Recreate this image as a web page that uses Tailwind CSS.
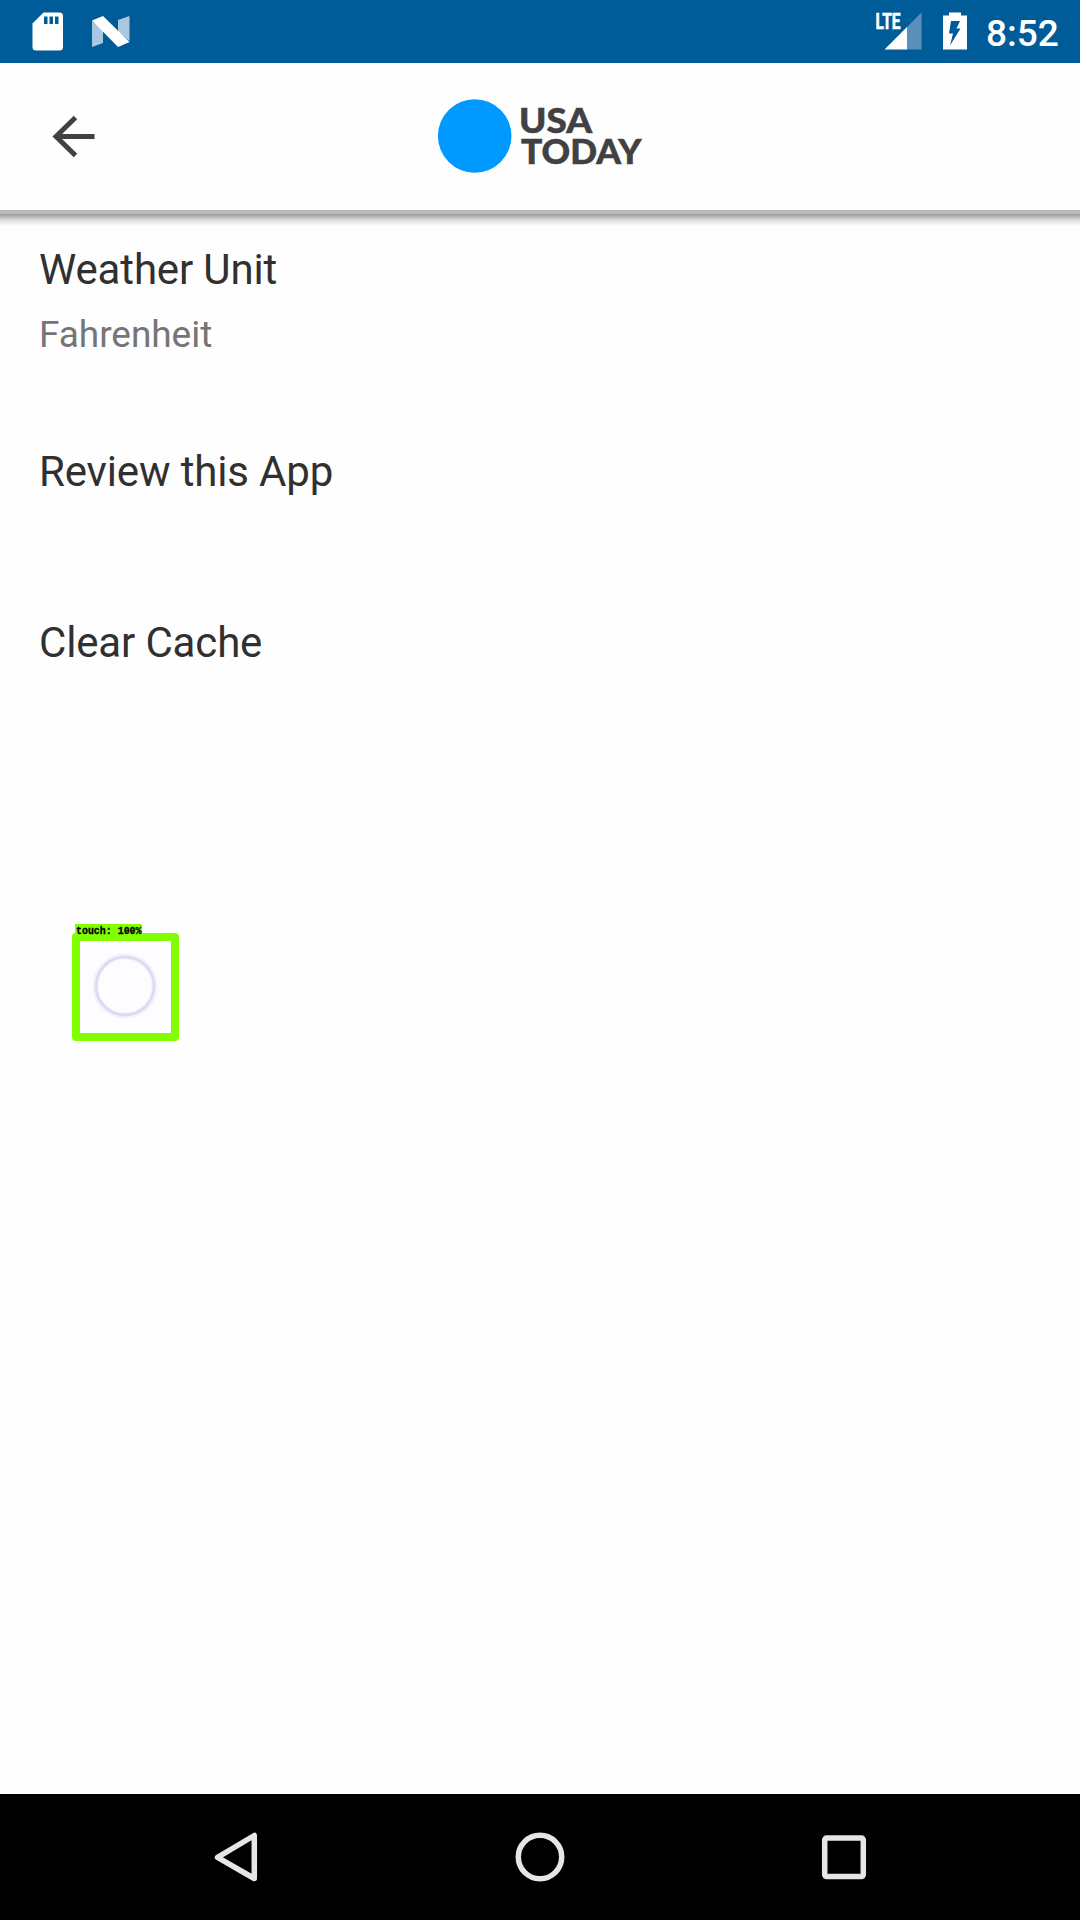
<!DOCTYPE html>
<html lang="en">
<head>
<meta charset="utf-8">
<title>USA TODAY Settings</title>
<script src="https://cdn.jsdelivr.net/npm/@tailwindcss/browser@4"></script>
</head>
<body class="bg-[#fefefe]">
<div class="relative flex h-[1920px] w-[1080px] flex-col overflow-hidden bg-[#fefefe] font-['Roboto',sans-serif]">
  <!-- Status bar -->
  <header class="flex h-[63px] shrink-0 items-center justify-between bg-[#005c99]">
    <svg class="h-[63px] w-[200px]" viewBox="0 0 200 63">
      <path fill="#fff" d="M43.500 12.500H59.500a3.500 3.500 0 0 1 3.500 3.500V47a3.500 3.500 0 0 1-3.500 3.500H36a3.500 3.500 0 0 1-3.500-3.500V23.500z"/>
      <path fill="#005c99" d="M44 16.500h3.500v7.500H44zM49.500 16.500H53v7.500h-3.500zM55 16.500h3.500v7.500H55z"/>
      <path fill="#a9c8df" d="M92 21L103 30V43L92 47zM118 20L129.500 16V41L118 32z"/>
      <path fill="#fff" d="M92 20.500L103 16L129.500 42L118 47z"/>
    </svg>
    <div class="flex items-center">
      <svg class="h-[63px] w-[120px]" viewBox="865 0 120 63">
        <path fill="#5990ba" d="M921.500 12.500V49.500H906V28z"/>
        <path fill="#fff" d="M884.500 49.500L907 27V49.500z"/>
        <text x="875.500" y="29" fill="#fff" stroke="#fff" stroke-width=".6" font-size="22" font-weight="700" textLength="25" lengthAdjust="spacingAndGlyphs">LTE</text>
        <path fill="#fff" d="M949 12.500h12v3h6V49.500H943V15.500h6z"/>
        <path fill="#005c99" d="M951 21H960L956.500 28.500H960.500L950 45.500L953 33.500H949z"/>
      </svg>
      <span class="w-[95px] pt-[5px] pl-[1px] text-[37px] leading-[44px] font-medium text-white">8:52</span>
    </div>
  </header>

  <!-- App bar -->
  <div class="z-10 flex h-[147px] shrink-0 items-center bg-[#fefefe] pb-[2px]">
    <svg class="ml-[43px] h-[60px] w-[60px] shrink-0" viewBox="43 106 60 60" fill="none" stroke="#414042" stroke-width="5">
      <path d="M75.500 117.500L56 136.500L75.500 155.500M55.500 136.500H94.500"/>
    </svg>
    <svg class="ml-[327px] h-[80px] w-[220px]" viewBox="430 96 220 80">
      <circle cx="474.700" cy="136" r="36.800" fill="#09f"/>
      <g fill="#414042" stroke="#414042" stroke-width=".5" font-family="Lato" font-weight="900" font-size="34">
        <text x="519" y="132.500" textLength="73" lengthAdjust="spacingAndGlyphs">USA</text>
        <text x="521" y="163.500" textLength="120.500" lengthAdjust="spacingAndGlyphs">TODAY</text>
      </g>
    </svg>
  </div>
  <div class="h-[4px] shrink-0 bg-[#b9b9b9]"></div>
  <div class="h-[12px] shrink-0 bg-linear-to-b from-[#999] via-[#dcdcdc] to-[#fefefe]"></div>

  <!-- Preferences -->
  <main class="flex flex-1 flex-col px-[39px] pt-[19px] text-[42px] leading-[50px] tracking-[-0.15px] text-[#303030]">
    <section>
      <h2>Weather Unit</h2>
      <p class="mt-[18px] text-[37px] leading-[44px] tracking-[-0.05px] text-[#757575]">Fahrenheit</p>
    </section>
    <h2 class="mt-[90px]">Review this App</h2>
    <h2 class="mt-[121px]">Clear Cache</h2>
  </main>

  <!-- Navigation bar -->
  <nav class="h-[126px] shrink-0 bg-black">
    <svg class="h-[126px] w-[1080px]" viewBox="0 1794 1080 126" fill="none" stroke="#e6e6e6" stroke-width="5.500" stroke-linejoin="round">
      <path d="M217.500 1857.300L254.300 1835.500V1878.500z"/>
      <circle cx="540" cy="1857" r="21.700"/>
      <rect x="824.700" y="1838" width="38.600" height="38.600" rx="2"/>
    </svg>
  </nav>

  <!-- Touch marker -->
  <svg class="absolute top-[910px] left-[60px] h-[140px] w-[130px]" viewBox="60 910 130 140">
    <rect x="76" y="937" width="99" height="100" fill="#fdfdff" stroke="#80ff00" stroke-width="8" stroke-linejoin="round"/>
    <rect x="75" y="924" width="67" height="14" fill="#80ff00"/>
    <circle cx="125" cy="986" r="29.500" fill="none" stroke="#f2f2fd" stroke-width="6"/>
    <circle cx="125" cy="986" r="29" fill="none" stroke="#dadaf0" stroke-width="2.500"/>
    <text x="76" y="934" font-family="Liberation Mono" font-weight="700" font-size="10.500" textLength="65.500" lengthAdjust="spacingAndGlyphs" fill="#000" stroke="#000" stroke-width=".3" xml:space="preserve">touch: 100%</text>
  </svg>
</div>
</body>
</html>
